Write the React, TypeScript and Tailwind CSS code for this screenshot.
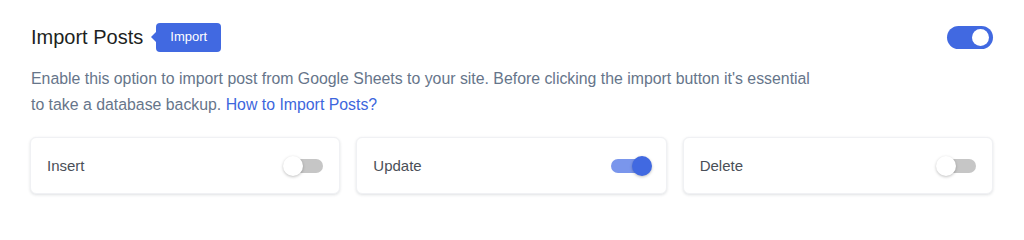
import { useState } from "react";

const SmallSwitch = ({ on, onToggle }: { on: boolean; onToggle: () => void }) => (
  <button
    type="button"
    onClick={onToggle}
    className="relative w-[42px] h-[20px] shrink-0"
    aria-pressed={on}
  >
    <span
      className={`absolute left-[1px] right-[2px] top-[3px] h-[14px] rounded-full ${
        on ? "bg-[#7a96ec]" : "bg-[#c6c6c6]"
      }`}
    />
    <span
      className={`absolute top-0 w-[20px] h-[20px] rounded-full shadow-[0_1px_3px_rgba(0,0,0,0.25)] ${
        on ? "left-[22px] bg-[#4169e1]" : "left-0 bg-white"
      }`}
    />
  </button>
);

const OptionCard = ({ label, on, onToggle }: { label: string; on: boolean; onToggle: () => void }) => (
  <div className="flex items-center justify-between h-[57px] pl-[16px] pr-[14px] bg-white rounded-md border border-[#f0f1f4] shadow-[0_1px_3px_rgba(30,41,59,0.14)]">
    <span className="text-[15px] text-[#4a4f57] pt-[2px]">{label}</span>
    <SmallSwitch on={on} onToggle={onToggle} />
  </div>
);

export default function App() {
  const [enabled, setEnabled] = useState(true);
  const [opts, setOpts] = useState({ insert: false, update: true, del: false });

  return (
    <div className="min-h-[217px] bg-white pl-[30px] pr-[31px] pt-[22px] font-['Liberation_Sans',Arial,sans-serif]">
      <div className="flex items-center justify-between h-[30px]">
        <div className="flex items-center pl-[1px]">
          <h2 className="text-[20px] text-[#1d1f22] leading-none">Import Posts</h2>
          <span className="relative ml-[13px] flex items-center h-[29px] px-[14px] rounded-[4px] bg-[#4169e1] text-[13px] text-white">
            <span className="absolute left-[-5px] top-1/2 -translate-y-1/2 w-0 h-0 border-y-[5px] border-y-transparent border-r-[5px] border-r-[#4169e1]" />
            Import
          </span>
        </div>
        <button
          type="button"
          onClick={() => setEnabled(!enabled)}
          className={`relative w-[46px] h-[23px] rounded-full ${enabled ? "bg-[#4169e1]" : "bg-[#c6c6c6]"}`}
        >
          <span
            className={`absolute top-[3px] w-[17px] h-[17px] rounded-full bg-white ${
              enabled ? "right-[4px]" : "left-[4px]"
            }`}
          />
        </button>
      </div>

      <p className="mt-[14px] pl-[1px] text-[15.85px] leading-[26px] text-[#66758a] max-w-[820px]">
        Enable this option to import post from Google Sheets to your site. Before clicking the import button it's essential
        <br />
        to take a database backup.{" "}
        <a href="#" className="text-[#3d66dd]">
          How to Import Posts?
        </a>
      </p>

      <div className="grid grid-cols-3 gap-[16px] mt-[19px]">
        <OptionCard label="Insert" on={opts.insert} onToggle={() => setOpts({ ...opts, insert: !opts.insert })} />
        <OptionCard label="Update" on={opts.update} onToggle={() => setOpts({ ...opts, update: !opts.update })} />
        <OptionCard label="Delete" on={opts.del} onToggle={() => setOpts({ ...opts, del: !opts.del })} />
      </div>
    </div>
  );
}
